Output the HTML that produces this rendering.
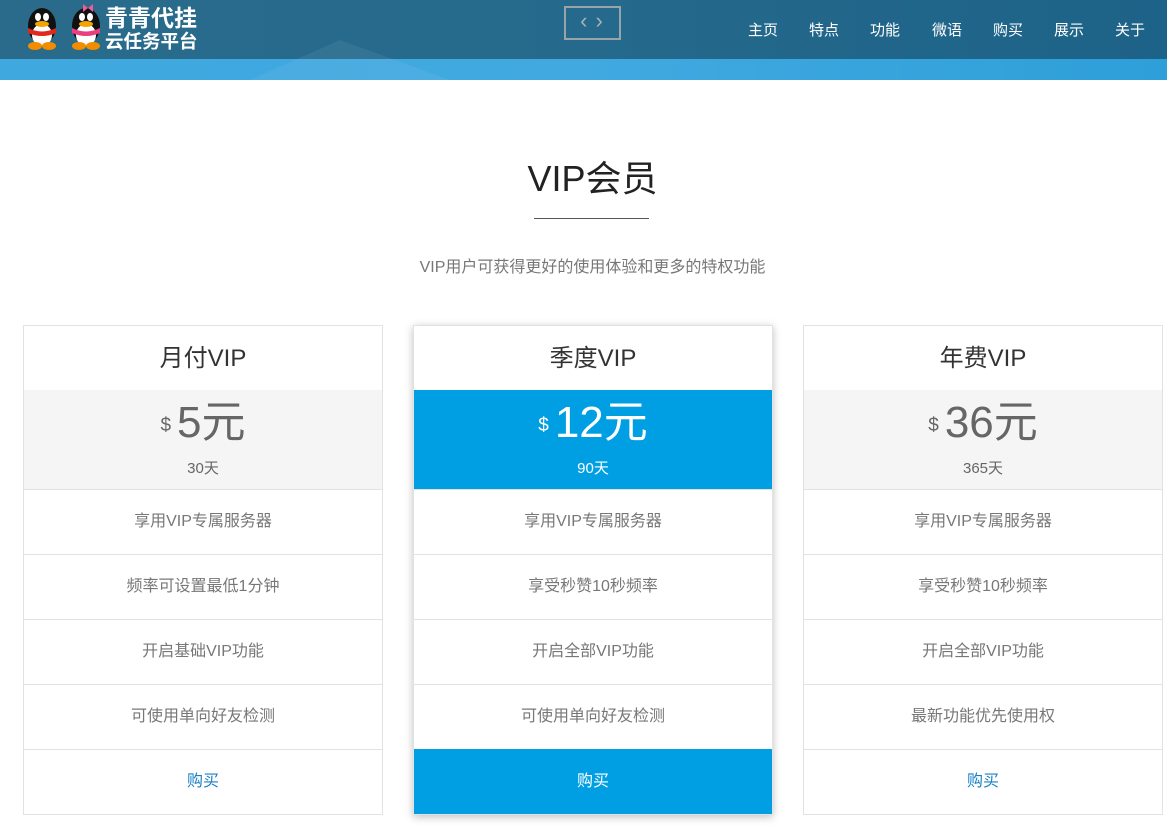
<!DOCTYPE html>
<html><head><meta charset="utf-8"><style>
*{box-sizing:border-box;margin:0;padding:0}
body{width:1167px;height:839px;overflow:hidden;background:#fff;font-family:"Liberation Sans","Noto Sans CJK SC",sans-serif;}
.hdr{position:absolute;left:0;top:0;width:1167px;height:80px;background:linear-gradient(90deg,#2a6b8b,#256a8c 50%,#1d6288);}
.hdr .low{position:absolute;left:0;top:59px;width:100%;height:21px;background:linear-gradient(90deg,#3ea8df,#41a9e0 50%,#2e9fd9);}
.mtn{position:absolute;left:250px;top:40px;width:0;height:0;border-left:90px solid transparent;border-right:110px solid transparent;border-bottom:40px solid rgba(200,225,240,.08)}
.logo{position:absolute;left:105px;top:5px;color:#fff;font-size:23px;font-weight:bold;line-height:26px}
.logo .s{font-size:18.5px;line-height:22px}
.tog{position:absolute;left:564px;top:6px;width:57px;height:34px;border:2px solid #9aa3a8;color:#aab2b6;font-size:22px;text-align:center;line-height:26px;letter-spacing:8px;padding-left:6px}
.nav{position:absolute;top:19px;font-size:15px;color:#fff}
h1{position:absolute;top:150px;left:18px;width:1149px;text-align:center;font-size:36px;font-weight:normal;color:#222}
.line{position:absolute;left:534px;top:218px;width:115px;height:1px;background:#555}
.sub{position:absolute;top:253px;left:18px;width:1149px;text-align:center;color:#777;font-size:16px}
.card{position:absolute;top:325px;width:360px;height:490px;border:1px solid #e2e2e2;background:#fff}
.card.mid{box-shadow:0 2px 8px rgba(0,0,0,.25)}
.t{height:64px;text-align:center;line-height:66px;font-size:24px;color:#333}
.p{height:99px;background:#f5f5f5;text-align:center;color:#666}
.mid .p{background:#009fe3;color:#fff}
.p .n{font-size:44px;line-height:66px}
.p .d{font-size:19px;vertical-align:6px;margin-right:6px}
.p .dy{font-size:15px;line-height:20px}
.r{height:65px;border-top:1px solid #e2e2e2;text-align:center;line-height:64px;font-size:16px;color:#777}
.buy{color:#1a82c4}
.mid .buy{background:#009fe3;color:#fff;border-top-color:#009fe3}
</style></head><body>
<div class="hdr"><div class="low"></div><div class="mtn"></div>
<svg style="position:absolute;left:22px;top:4px" width="84" height="46">
<g><ellipse cx="20" cy="22" rx="14" ry="18" fill="#111"/><ellipse cx="20" cy="31" rx="10" ry="11" fill="#fff"/><ellipse cx="16" cy="13" rx="3" ry="4" fill="#fff"/><ellipse cx="24" cy="13" rx="3" ry="4" fill="#fff"/><ellipse cx="20" cy="20" rx="7" ry="3" fill="#f4a400"/><path d="M6 24 Q20 31 34 24 L34 29 Q20 35 6 29Z" fill="#e0281c"/><ellipse cx="13" cy="42" rx="7" ry="4" fill="#f28c00"/><ellipse cx="27" cy="42" rx="7" ry="4" fill="#f28c00"/></g>
<g transform="translate(44,0)"><ellipse cx="20" cy="22" rx="14" ry="18" fill="#111"/><ellipse cx="20" cy="31" rx="10" ry="11" fill="#fff"/><ellipse cx="16" cy="13" rx="3" ry="4" fill="#fff"/><ellipse cx="24" cy="13" rx="3" ry="4" fill="#fff"/><ellipse cx="20" cy="20" rx="7" ry="3" fill="#f4a400"/><path d="M6 24 Q20 31 34 24 L34 29 Q20 35 6 29Z" fill="#e8407f"/><path d="M22 4 l-5 -4 v8z M22 4 l5 -4 v8z" fill="#f05a9a"/><ellipse cx="13" cy="42" rx="7" ry="4" fill="#f28c00"/><ellipse cx="27" cy="42" rx="7" ry="4" fill="#f28c00"/></g>
</svg>
<div class="logo">青青代挂<div class="s">云任务平台</div></div>
<div class="tog">‹›</div>
<div class="nav" style="left:748px">主页</div><div class="nav" style="left:809px">特点</div><div class="nav" style="left:870px">功能</div><div class="nav" style="left:932px">微语</div><div class="nav" style="left:993px">购买</div><div class="nav" style="left:1054px">展示</div><div class="nav" style="left:1115px">关于</div>
</div>
<h1>VIP会员</h1><div class="line"></div>
<div class="sub">VIP用户可获得更好的使用体验和更多的特权功能</div>
<div class="card" style="left:23px"><div class="t">月付VIP</div><div class="p"><div class="n"><span class="d">$</span>5元</div><div class="dy">30天</div></div>
<div class="r">享用VIP专属服务器</div><div class="r">频率可设置最低1分钟</div><div class="r">开启基础VIP功能</div><div class="r">可使用单向好友检测</div><div class="r buy">购买</div></div>
<div class="card mid" style="left:413px"><div class="t">季度VIP</div><div class="p"><div class="n"><span class="d">$</span>12元</div><div class="dy">90天</div></div>
<div class="r">享用VIP专属服务器</div><div class="r">享受秒赞10秒频率</div><div class="r">开启全部VIP功能</div><div class="r">可使用单向好友检测</div><div class="r buy">购买</div></div>
<div class="card" style="left:803px"><div class="t">年费VIP</div><div class="p"><div class="n"><span class="d">$</span>36元</div><div class="dy">365天</div></div>
<div class="r">享用VIP专属服务器</div><div class="r">享受秒赞10秒频率</div><div class="r">开启全部VIP功能</div><div class="r">最新功能优先使用权</div><div class="r buy">购买</div></div>
</body></html>
